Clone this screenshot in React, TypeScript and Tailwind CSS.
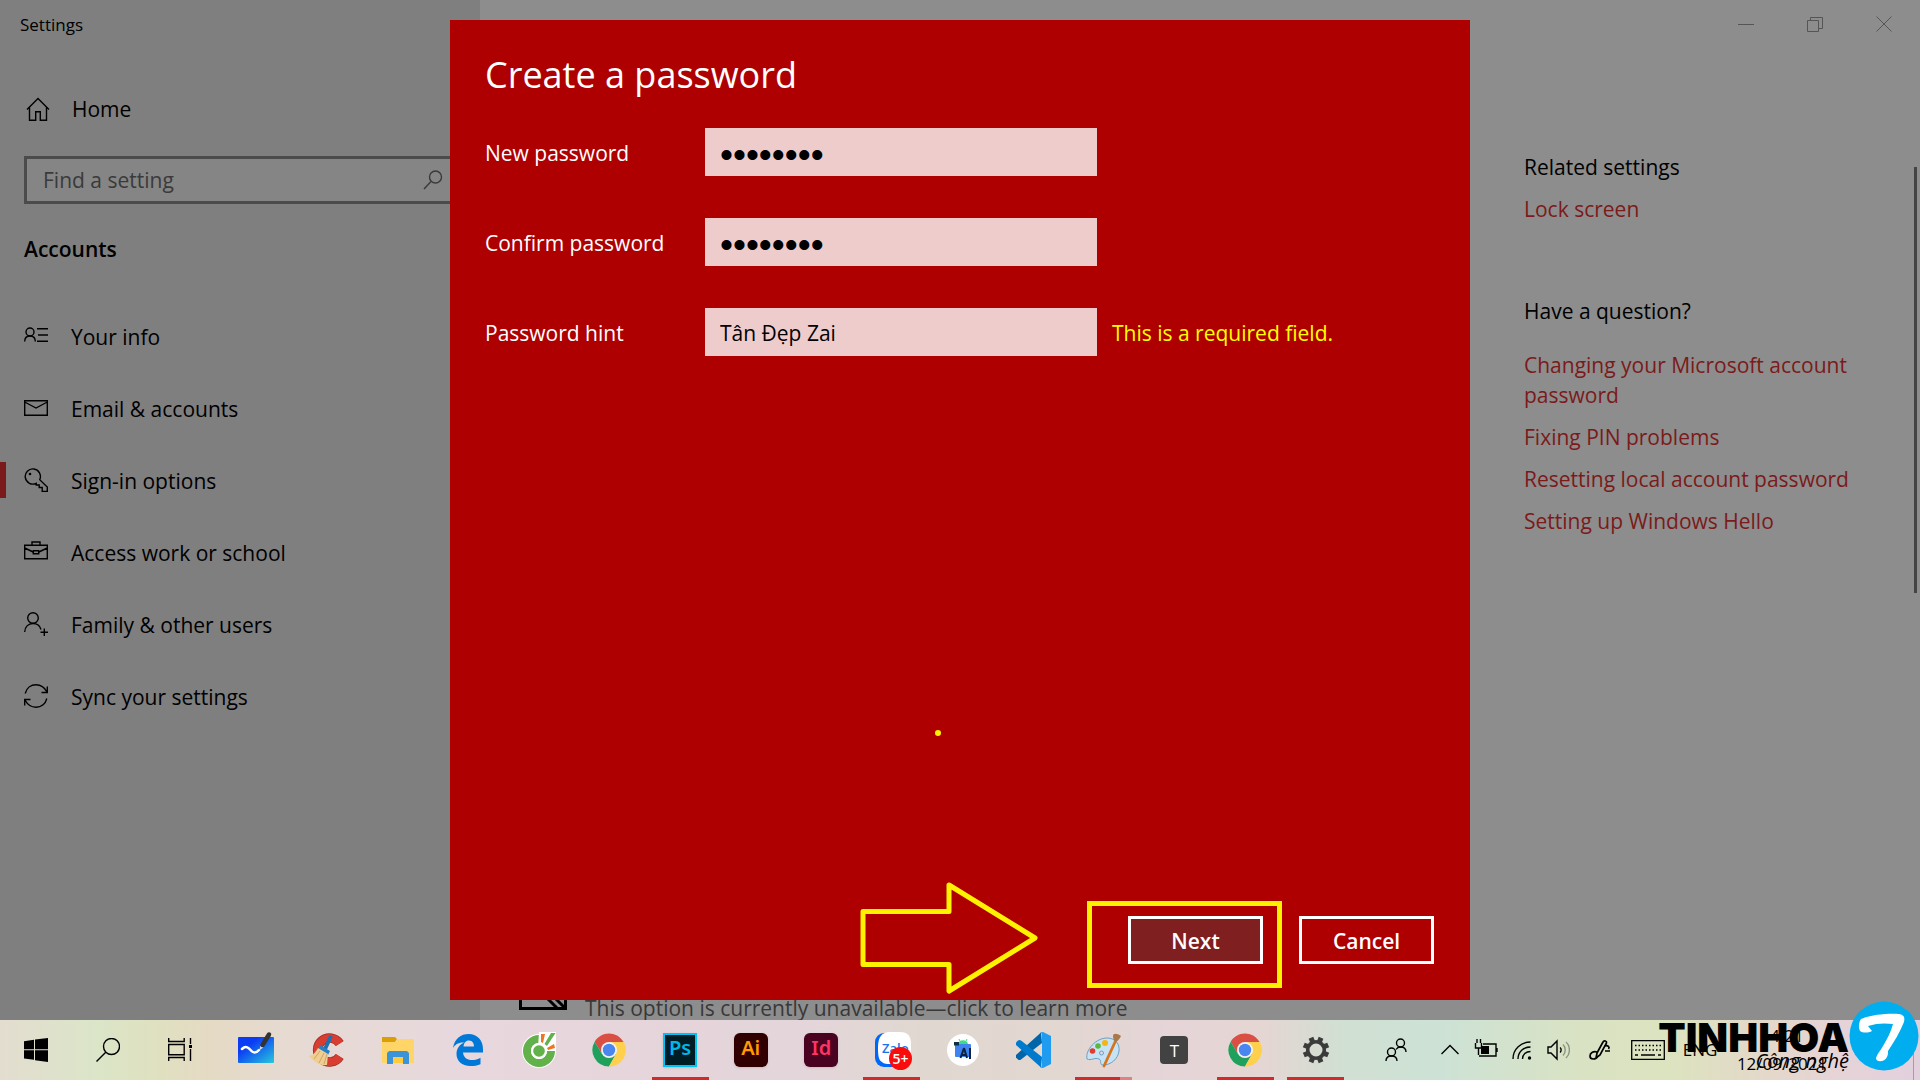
import React from "react";

type IconProps = { children: React.ReactNode; size?: number; className?: string };

function Line({ children, size = 24, className = "" }: IconProps) {
  return (
    <svg
      width={size}
      height={size}
      viewBox={`0 0 ${size} ${size}`}
      fill="none"
      stroke="currentColor"
      strokeWidth="1.4"
      className={`shrink-0 ${className}`}
      aria-hidden="true"
    >
      {children}
    </svg>
  );
}

const navItems = [
  {
    label: "Your info",
    icon: (
      <>
        <circle cx="6" cy="8" r="4" />
        <path d="M.7 17.500C.7 14 3 12 6 12s5.300 2 5.300 5.500M13 4.700h11M14 11h10M13 17.300h11" />
      </>
    ),
  },
  {
    label: "Email & accounts",
    icon: <path d="M.7 4.700h22.600v14.600H.700zM.700 6l11.300 6L23.300 6" />,
  },
  {
    label: "Sign-in options",
    active: true,
    icon: (
      <>
        <path d="M15.700 11.700A7.600 7.600 0 1 0 12.200 15.300L12.200 17h3v2.500h3v4h5.100v-4.500z" />
        <circle cx="6" cy="6" r="1.300" fill="currentColor" stroke="none" />
      </>
    ),
  },
  {
    label: "Access work or school",
    icon: (
      <>
        <path d="M.7 5.200h22.600v13.500H.700zM8 5.200V2h8v3.200M.700 8l8.500 4M23.300 8l-8.500 4" />
        <path d="M9.300 10.700h5.400v3H9.300z" />
      </>
    ),
  },
  {
    label: "Family & other users",
    icon: (
      <>
        <circle cx="9" cy="6" r="5.300" />
        <path d="M.7 20c0-5 3.500-8.500 8.300-8.500 4 0 7 2.500 8 6M20.300 16.500v7.500M16.500 20.200h7.500" />
      </>
    ),
  },
  {
    label: "Sync your settings",
    icon: (
      <path d="M1.200 9.500C2.500 4 7 .8 12 .8c4.500 0 8.500 2.500 11 7.200M23.300 2.500v6H17.500M22.800 14.500C21.500 20 17 23.200 12 23.200c-4.500 0-8.500-2.500-11-7.200M.7 21.500v-6H6.500" />
    ),
  },
];

const questionLinks = [
  "Changing your Microsoft account password",
  "Fixing PIN problems",
  "Resetting local account password",
  "Setting up Windows Hello",
];

function Sidebar() {
  return (
    <aside className="w-[480px] shrink-0 bg-[#7f7f7f]">
      <div className="flex h-12 items-center px-5 pt-0.5 text-[17px]">Settings</div>
      <a href="#home" className="mt-8 flex h-[60px] items-center gap-6 pl-6">
        <Line size={28}>
          <path d="M3 13.500 14 2.500 25 13.500M5.500 11v13.300h6.200v-8.500h4.600v8.500h6.200V11" />
        </Line>
        <span className="-ml-1">Home</span>
      </a>
      <div className="mx-6 mt-4 flex h-12 items-center border-3 border-[#4b4b4b] bg-[#858585] pr-2.5 pl-4">
        <input
          aria-label="Find a setting"
          placeholder="Find a setting"
          className="min-w-0 flex-1 bg-transparent pt-0.5 outline-none placeholder:text-[#3a3a3a]"
        />
        <Line size={20} className="text-[#3a3a3a]">
          <circle cx="12.500" cy="7" r="6" />
          <path d="M8 11.500 1 19" />
        </Line>
      </div>
      <h1 className="mt-[30px] pl-6 text-[21px] leading-[30px] font-semibold">Accounts</h1>
      <nav className="mt-9">
        {navItems.map((item) => (
          <a key={item.label} href="#section" className="flex h-[72px] items-center gap-[23px]">
            <span className={item.active ? "h-9 w-1.5 bg-[#7b1a1a]" : "h-9 w-1.5"} />
            <span className="-ml-[5px]">
              <Line>{item.icon}</Line>
            </span>
            <span className="pt-1">{item.label}</span>
          </a>
        ))}
      </nav>
    </aside>
  );
}

function Content() {
  return (
    <main className="relative flex min-w-0 flex-1 flex-col bg-[#8d8d8d]">
      <div className="flex h-12 shrink-0 items-center justify-end pr-0.5 text-[#555]">
        <button aria-label="Minimize" className="flex w-[69px] justify-center">
          <Line size={16}>
            <path d="M0 8.500h16" strokeWidth="1" />
          </Line>
        </button>
        <button aria-label="Restore" className="flex w-[69px] justify-center">
          <Line size={16}>
            <path d="M.5 4.500h11v11H.500zM3.500 4.500v-3h12v11h-4" strokeWidth="1" />
          </Line>
        </button>
        <button aria-label="Close" className="flex w-[69px] justify-center">
          <Line size={16}>
            <path d="m.5.5 15 15M15.500.5l-15 15" strokeWidth="1" />
          </Line>
        </button>
      </div>
      <section className="mt-[104px] mr-6 w-[372px] self-end leading-[30px]">
        <h2>Related settings</h2>
        <a href="#lock" className="mt-3 block text-[#7b1a1a]">
          Lock screen
        </a>
        <h2 className="mt-[72px]">Have a question?</h2>
        <div className="mt-6 flex flex-col gap-3 text-[#7b1a1a]">
          {questionLinks.map((t) => (
            <a key={t} href="#help">
              {t}
            </a>
          ))}
        </div>
      </section>
      <div className="mt-auto flex items-end gap-[18px] pl-[39px] text-[#383838]">
        <svg width="48" height="48" viewBox="0 0 48 48" fill="none" stroke="#000" strokeWidth="3" className="mb-2.5" aria-hidden="true">
          <path d="M1.500 1.500h45v45h-45zM26 34l12 12M34 34l12 12" />
        </svg>
        <p className="-mb-[3px] leading-[30px]">This option is currently unavailable—click to learn more</p>
      </div>
      <div className="absolute top-[167px] right-[3px] h-[426px] w-[3px] bg-[#444]" />
    </main>
  );
}

const field = "h-12 w-[392px] bg-[#efcccc] px-[15px] text-black outline-none";

function Dialog() {
  return (
    <form
      role="dialog"
      aria-labelledby="dialog-title"
      className="absolute inset-y-5 left-1/2 flex w-[1020px] -translate-x-1/2 flex-col bg-[#ae0000] pt-7 pr-9 pb-9 pl-[35px] text-white"
    >
      <h2 id="dialog-title" className="text-[36px] leading-[54px] font-normal">
        Create a password
      </h2>
      <div className="mt-[26px] grid grid-cols-[220px_392px_1fr] items-center gap-y-[42px]">
        <label htmlFor="new-password" className="pt-1">
          New password
        </label>
        <input
          id="new-password"
          type="password"
          defaultValue="abcdefgh"
          className={`${field} col-span-2 pt-1.5 font-['Liberation_Sans'] text-[37px]`}
        />
        <label htmlFor="confirm-password" className="pt-1">
          Confirm password
        </label>
        <input
          id="confirm-password"
          type="password"
          defaultValue="abcdefgh"
          className={`${field} col-span-2 pt-1.5 font-['Liberation_Sans'] text-[37px]`}
        />
        <label htmlFor="hint" className="pt-1">
          Password hint
        </label>
        <input id="hint" type="text" defaultValue="Tân Đẹp Zai" className={`${field} pt-0.5`} />
        <p className="pt-1 pl-[15px] text-[#ffff00]">This is a required field.</p>
      </div>
      <div className="mt-auto flex justify-end gap-9 font-semibold">
        <button type="button" className="h-12 w-[135px] border-3 border-white bg-[#7f1f1f] pt-1">
          Next
        </button>
        <button type="button" className="h-12 w-[135px] border-3 border-white pt-1">
          Cancel
        </button>
      </div>
      <span className="absolute right-[529px] bottom-[264px] h-1.5 w-1.5 rounded-full bg-[#fff200]" />
      <svg
        width="178"
        height="112"
        viewBox="0 0 178 112"
        className="absolute right-[432px] bottom-1.5"
        fill="none"
        stroke="#fff200"
        strokeWidth="5"
        strokeLinejoin="round"
        aria-hidden="true"
      >
        <path d="M3 29.500h86V3l86 53-86 53V82.500H3z" />
      </svg>
      <span className="pointer-events-none absolute right-[188px] bottom-3 h-[87px] w-[195px] border-5 border-[#fff200]" />
    </form>
  );
}

function Art({ children, label }: { children: React.ReactNode; label: string }) {
  return (
    <svg width="40" height="40" viewBox="0 0 40 40" role="img" aria-label={label}>
      {children}
    </svg>
  );
}

function Chrome() {
  return (
    <Art label="Chrome">
      <path d="M20 12H34.500l-.3-.5A16.500 16.500 0 0 0 5.700 11.700L13 24z" fill="#d94f43" />
      <path d="M5.700 11.700A16.500 16.500 0 0 0 20 36.500L27 24l-14 0z" fill="#1fa15d" />
      <path d="M27 24 20 36.500A16.500 16.500 0 0 0 34.800 12H20z" fill="#ffd04b" />
      <circle cx="20" cy="20" r="8" fill="#f5f1f1" />
      <circle cx="20" cy="20" r="6.200" fill="#4a86f0" />
    </Art>
  );
}

function AdobeTile({ text, label, tile }: { text: string; label: string; tile: string }) {
  return (
    <span
      role="img"
      aria-label={label}
      className={`flex h-[34px] w-[34px] items-center justify-center pb-1 font-['Noto_Sans'] text-[20px] leading-none font-semibold shadow ${tile}`}
    >
      {text}
    </span>
  );
}

const rays = [0, 45, 90, 135, 180, 225, 270, 315];

const apps: { name: string; art: React.ReactNode; open?: "one" | "many" }[] = [
  {
    name: "Whiteboard",
    art: (
      <Art label="Whiteboard">
        <defs>
          <linearGradient id="board" x1="0" y1="0" x2="1" y2="1">
            <stop offset=".3" stopColor="#0b3cf5" />
            <stop offset="1" stopColor="#28c8dc" />
          </linearGradient>
        </defs>
        <rect x="2" y="7" width="36" height="26" rx="1" fill="url(#board)" />
        <path d="M6 19c4-4 7-1 9 1.500s5 3 8-.5" fill="none" stroke="#fff" strokeWidth="2.500" strokeLinecap="round" />
        <path d="m23.500 20 1-4.500 3 2z" fill="#ddd" />
        <path d="M26.500 15 33 4.500" stroke="#333" strokeWidth="4.500" strokeLinecap="round" />
      </Art>
    ),
  },
  {
    name: "CCleaner",
    art: (
      <Art label="CCleaner">
        <path d="M32.700 13.500A12 12 0 1 0 32.700 26.500" fill="none" stroke="#9e2a22" strokeWidth="9.500" />
        <path d="M32.700 13.500A12 12 0 1 0 32.700 26.500" fill="none" stroke="#d93c30" strokeWidth="8" />
        <path d="M24 6 18 19" stroke="#1c70b4" strokeWidth="4" />
        <path d="m13 15 10 6-2 4-10-6z" fill="#2580c4" />
        <path d="m11 18 10 6-1 11c-7 1-13-3-18-9 4-1 7-4 9-8z" fill="#f0ce92" />
        <path d="m13 21-6 8M17 23l-5 10M20 24l-3 10" stroke="#d0a468" fill="none" />
      </Art>
    ),
  },
  {
    name: "File Explorer",
    art: (
      <Art label="File Explorer">
        <path d="M4 7h13l2 2-2 3H4z" fill="#dc9e05" />
        <path d="M4 12h13l3-3h16v23a1 1 0 0 1-1 1H5a1 1 0 0 1-1-1z" fill="#ffd567" />
        <path d="M9 33V23l2-2h18l2 2v11h-6v-7H15v7H9z" fill="#3c94d8" />
        <path d="M15 33v-6h10v6z" fill="#ffca3b" />
      </Art>
    ),
  },
  {
    name: "Edge",
    art: (
      <Art label="Edge">
        <path
          d="M5 18C6.500 8.500 13 4 20.500 4 30 4 35 11 35 19v3.500H15c.5 5 4 7.500 9 7.500 3 0 6-.8 8.500-2.300v6.500C29.500 35.500 26 36 22.500 36 13.500 36 8.500 30.500 8.500 24c0-5.500 3-9.500 8-11.500-6-.5-9.500 2-11.500 5.500zM15.500 16.500H26c0-3-1.500-6-5-6s-5 2.500-5.500 6z"
          fill="#0078d7"
        />
      </Art>
    ),
  },
  {
    name: "Coc Coc",
    art: (
      <Art label="Coc Coc">
        <circle cx="20" cy="21" r="17" fill="#fff" />
        <path d="M20 5A16 16 0 1 0 36 21H28a8 8 0 1 1-8-8z" fill="#62b14a" />
        <path d="M19 18 20 2h17v19z" fill="#fff" />
        <circle cx="20" cy="21" r="8" fill="#fff" />
        <circle cx="20" cy="21" r="5.800" fill="#62b14a" />
        <path d="m22 12 0-8h4l-2 9zM28 18l7-4 1 4-7 2z" fill="#ee7623" />
        <path d="m25.500 14 6.500-11h4.500l-8.500 13z" fill="#62b14a" />
      </Art>
    ),
  },
  { name: "Chrome", art: <Chrome /> },
  {
    name: "Photoshop",
    open: "one",
    art: <AdobeTile text="Ps" label="Photoshop" tile="border-2 border-[#00c3f5] bg-[#001d26] text-[#00b8e8]" />,
  },
  {
    name: "Illustrator",
    art: <AdobeTile text="Ai" label="Illustrator" tile="rounded-md bg-[#300000] text-[#ff9a00]" />,
  },
  {
    name: "InDesign",
    art: <AdobeTile text="Id" label="InDesign" tile="rounded-md bg-[#49021f] text-[#ff3366]" />,
  },
  {
    name: "Zalo",
    open: "one",
    art: (
      <Art label="Zalo">
        <rect x="3" y="3" width="34" height="34" rx="9" fill="#0068f8" />
        <path d="M18 2h10c8 0 11 4 11 12v11c0 7-4 9-11 9H18c-3 0-6 0-8-2-4-2-4-9-4-15C6 7 10 2 18 2z" fill="#fff" />
        <text x="10" y="23" fontSize="13" fontWeight="600" fill="#1574e8" fontFamily="Open Sans, sans-serif">
          Zalo
        </text>
        <circle cx="28.500" cy="28.500" r="11.500" fill="#f90c0c" />
        <text x="28.500" y="33.500" fontSize="14" fontWeight="600" fill="#fff" textAnchor="middle" fontFamily="Open Sans, sans-serif">
          5+
        </text>
      </Art>
    ),
  },
  {
    name: "Android Studio",
    art: (
      <Art label="Android Studio">
        <circle cx="20" cy="20" r="16" fill="#fff" />
        <rect x="12" y="14" width="16" height="13" rx="1" fill="#3f82f0" />
        <path d="M15 14c1-5 9-5 10 0z" fill="#3ddc84" />
        <path d="m17 11-1-2M23 11l1-2" stroke="#3ddc84" />
        <path d="m21 18-3.500 10M21 18l3 10M18 25h5.500M27 18v11" stroke="#0a2440" strokeWidth="2" fill="none" />
        <path d="M11 12h5v3.500h-5z" fill="#0a3042" />
      </Art>
    ),
  },
  {
    name: "Visual Studio Code",
    art: (
      <Art label="Visual Studio Code">
        <path d="M28 2.500 3 25v2.500l2 2c1 .8 2 .7 3 0L29 13z" fill="#0065a9" />
        <path d="M28 37.500 3 15v-2.500l2-2c1-.8 2-.7 3 0L29 27z" fill="#007acc" />
        <path d="m27 2.500 3-.5 8 4v28l-8 4-3-.5c1 0 2-1 2-2.500V5c0-1.500-1-2.500-2-2.500z" fill="#1f9cf0" />
      </Art>
    ),
  },
  {
    name: "Paint",
    open: "many",
    art: (
      <Art label="Paint">
        <path
          d="M3 29C1 20 12 8 23 8c8 0 13 6 12 13-1 8-8 14-16 14-4 0-1-5-4-6-4-2-8 2-12 0z"
          fill="#c5e3f5"
          stroke="#6ba0c4"
        />
        <circle cx="8.500" cy="21" r="2.800" fill="#e23b2e" />
        <circle cx="14" cy="16" r="2.800" fill="#5cb83c" />
        <circle cx="21" cy="13" r="3" fill="#f6b414" />
        <circle cx="17.500" cy="23" r="2" fill="#e5d8dc" stroke="#6ba0c4" />
        <path d="M20 36 32 10" stroke="#d9741e" strokeWidth="2.800" strokeLinecap="round" />
        <path d="M29 6c0-3 4-3 8 0-1 2-2 4-5 6-2-1-3-3-3-6z" fill="#a8794a" />
      </Art>
    ),
  },
  {
    name: "Typora",
    art: (
      <span role="img" aria-label="Typora" className="flex h-7 w-7 items-center justify-center rounded-sm bg-[#424242] text-[17px] leading-none text-white">
        T
      </span>
    ),
  },
  { name: "Chrome window", open: "one", art: <Chrome /> },
  {
    name: "Settings",
    open: "one",
    art: (
      <Art label="Settings">
        <circle cx="20" cy="20" r="8.300" fill="none" stroke="#3c3c3c" strokeWidth="3.600" />
        {rays.map((a) => (
          <rect key={a} x="17.500" y="6.800" width="5" height="4.500" fill="#3c3c3c" transform={`rotate(${a + 22.5} 20 20)`} />
        ))}
      </Art>
    ),
  },
];

function Tray() {
  return (
    <div className="ml-auto flex h-full items-center">
      <button aria-label="People" className="flex w-[72px] justify-center">
        <Line>
          <circle cx="16.500" cy="5" r="4" />
          <circle cx="7.500" cy="14" r="4" />
          <path d="M2 23c0-3 2-5 5.500-5s5.500 2 5.500 5M12 11.500C13 9.800 14.500 9 16.500 9c3.500 0 5.500 2 5.500 5" />
        </Line>
      </button>
      <button aria-label="Show hidden icons" className="flex w-9 justify-center">
        <Line size={20}>
          <path d="m1.500 14 8.500-8.500 8.500 8.500" />
        </Line>
      </button>
      <button aria-label="Battery" className="flex w-9 justify-center">
        <Line>
          <path d="M9 6h13v12H5M23 10v4M1.500 5v5h6V5M3 5V1M6.500 5V1M4.500 10v7" />
          <path d="M8 8h7v8H7v-5z" fill="currentColor" stroke="none" />
        </Line>
      </button>
      <button aria-label="Network" className="flex w-9 justify-center">
        <Line size={20}>
          <path d="M1 19C1 9 9 2 18.500 2M6 19c0-7.500 5.500-12 12.500-12M10.500 19c0-4.500 3.500-7.500 8-7.500" />
          <circle cx="17.500" cy="18" r="1.700" fill="currentColor" stroke="none" />
        </Line>
      </button>
      <button aria-label="Volume" className="flex w-9 justify-center">
        <Line>
          <path d="M2 9h3l6-6v18l-6-6H2zM14 9.500c1.500 1 1.500 4 0 5" />
          <path d="M17 6.500c3 3 3 8 0 11M20 4c4.500 4 4.500 12 0 16" opacity=".35" />
        </Line>
      </button>
      <button aria-label="Windows Ink" className="flex w-12 justify-center">
        <Line>
          <path d="M9 15 15 4c1-2 4-1 3.500 1L12 17l-4 3zM9 14c-4-1-7 1-7 4 0 4 6 4 8 0M17 8c3-1 5 1 3.500 3M17 13h5" strokeWidth="1.700" />
        </Line>
      </button>
      <button aria-label="Touch keyboard" className="flex w-12 justify-center">
        <svg width="34" height="20" viewBox="0 0 34 20" fill="none" stroke="currentColor" strokeWidth="1.300" aria-hidden="true">
          <path d="M.7.700h32.600v18.600H.700z" />
          <path d="M4 5.500h26M4 10h26" strokeDasharray="1.500 2" />
          <path d="M4 15h3M10 15h14M27 15h3" />
        </svg>
      </button>
      <button className="w-14 text-center">ENG</button>
      <button className="mr-[77px] w-[108px] text-center leading-7">
        14:21
        <br />
        12/09/2021
      </button>
      <span className="mr-1.5 h-full w-px bg-black/25" />
    </div>
  );
}

function Watermark() {
  return (
    <div className="pointer-events-none absolute -top-[19px] right-px flex items-start" aria-label="Tinh Hoa Công nghệ">
      <div className="flex flex-col items-end pt-4 text-right">
        <span className="font-['Inter'] text-[40px] leading-[42px] font-black">TINHHOA</span>
        <span className="-mt-2 font-['Open_Sans'] text-[20px] leading-5 italic">Công nghệ</span>
      </div>
      <svg width="70" height="70" viewBox="0 0 70 70" aria-hidden="true">
        <circle cx="35" cy="35" r="34.500" fill="#00adef" />
        <path
          d="M11 30c-2-4-1-9 1-12 9-4 26-6 38-5 5 1 6 3 5 8-4 10-10 20-16 29 0 2 0 4-1 6-2 5-11 6-11 1 1-4 5-8 7-12 4-7 8-14 10-22-8-1-16-1-25 2l4 5c-4 2-9 2-12 0z"
          fill="#fff"
        />
      </svg>
    </div>
  );
}

function Taskbar() {
  return (
    <footer className="relative flex h-[60px] shrink-0 items-center bg-[linear-gradient(90deg,#e3ddd0_0%,#dbe5c8_5%,#dfe1c0_8%,#e5dac4_11%,#e6dad2_15%,#e8d8de_24%,#e6d5da_32%,#e4d5da_42%,#e0d8d0_48%,#e2d7d1_55%,#e6d4d8_61%,#e4d6d2_66%,#d0e0d2_70%,#cde2d6_75%,#d9e2c4_82%,#dce3bf_87%,#e4d8ca_92%,#e6d3d8_96%,#e2d0de_100%)] text-[17px]">
      <button aria-label="Start" className="flex w-[72px] justify-center">
        <svg width="24" height="24" viewBox="0 0 24 24" aria-hidden="true">
          <path d="M0 3.200 10 1.800v9.500H0zM11 1.600 24 0v11.300H11zM0 12.300h10v9.500L0 20.600zM11 12.300h13V24l-13-1.800z" />
        </svg>
      </button>
      <button aria-label="Search" className="flex w-[72px] justify-center">
        <Line>
          <circle cx="15.500" cy="8.500" r="8" />
          <path d="M10 14 .5 23.500" />
        </Line>
      </button>
      <button aria-label="Task View" className="flex w-[72px] justify-center">
        <Line>
          <path d="M.7 0v3.500h15.500V0M.700 6.500h15.500v10.200H.700zM.700 23v-3.500h15.500V23M22.500 0v6M22.500 11v12" />
          <path d="M21 7h3v3h-3z" fill="currentColor" stroke="none" />
        </Line>
      </button>
      <div className="ml-[5px] flex h-full w-[1130px]">
        {apps.map((app) => (
          <button key={app.name} aria-label={app.name} className="relative flex flex-1 items-center justify-center">
            {app.art}
            {app.open && (
              <span className="absolute bottom-0 flex h-[3px] w-[57px] bg-[#d22a2a]">
                {app.open === "many" && <span className="ml-auto w-3 bg-[#e08080]" />}
              </span>
            )}
          </button>
        ))}
      </div>
      <Tray />
      <Watermark />
    </footer>
  );
}

export default function App() {
  return (
    <div className="flex h-screen flex-col overflow-hidden font-['Open_Sans','Noto_Sans',sans-serif] text-[21px] text-black">
      <div className="relative flex min-h-0 flex-1">
        <Sidebar />
        <Content />
        <Dialog />
      </div>
      <Taskbar />
    </div>
  );
}
